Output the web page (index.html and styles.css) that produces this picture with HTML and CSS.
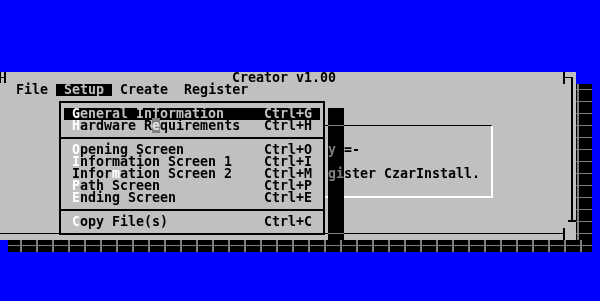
FILE: index.html
```html
<!DOCTYPE html>
<html>
<head>
<meta charset="utf-8">
<title>Creator v1.00</title>
<link rel="stylesheet" href="styles.css">
</head>
<body>
<div class="screen">
  <div class="desk">
    <div class="window">
      <div class="title">Creator v1.00</div>
      <div class="menubar">
        <span class="mi">File</span>
        <span class="mi active">Setup</span>
        <span class="mi">Create</span>
        <span class="mi">Register</span>
      </div>
      <div class="workspace">
        <div class="dialog">
          <div class="dline">y =-</div>
          <div class="dline gap">gister CzarInstall.</div>
        </div>
      </div>

      <i class="orn tl"></i>
      <i class="orn tr-tick"></i>
      <i class="orn tr-h"></i>
      <i class="orn r-line"></i>
      <i class="orn r-foot"></i>
      <i class="orn br-tick"></i>
      <i class="orn b-line"></i>

      <div class="dropdown">
        <div class="item sel"><span><b class="hk">G</b>eneral Information</span><span>Ctrl+G</span></div>
        <div class="item"><span><b class="hk">H</b>ardware R<span class="cur">e</span>quirements</span><span>Ctrl+H</span></div>
        <div class="sep"></div>
        <div class="item"><span><b class="hk">O</b>pening Screen</span><span>Ctrl+O</span></div>
        <div class="item"><span><b class="hk">I</b>nformation Screen 1</span><span>Ctrl+I</span></div>
        <div class="item"><span>Infor<b class="hk">m</b>ation Screen 2</span><span>Ctrl+M</span></div>
        <div class="item"><span><b class="hk">P</b>ath Screen</span><span>Ctrl+P</span></div>
        <div class="item"><span><b class="hk">E</b>nding Screen</span><span>Ctrl+E</span></div>
        <div class="sep"></div>
        <div class="item"><span><b class="hk">C</b>opy File(s)</span><span>Ctrl+C</span></div>
      </div>
      <div class="mshadow"></div>
    </div>
    <div class="shadow-r shade"></div>
    <div class="shadow-b shade"></div>
  </div>
</div>
</body>
</html>
```

FILE: styles.css
```css
* {
  box-sizing: border-box;
  margin: 0;
  padding: 0;
}

html, body {
  background: #0000ff;
}

body {
  width: 600px;
  height: 301px;
  overflow: hidden;
  font-family: "DejaVu Sans Mono", "Liberation Mono", monospace;
  font-weight: bold;
  font-size: 13.3px;
  line-height: 12px;
  color: #000;
}

.screen {
  width: 600px;
  height: 301px;
  background: #0000ff;
  padding-top: 72px;
}

.desk {
  display: grid;
  grid-template-columns: 8px 568px 16px;
  grid-template-rows: 12px 156px 12px;
}

.window {
  grid-column: 1 / 3;
  grid-row: 1 / 3;
  background: #c0c0c0;
  position: relative;
}

.shade {
  background-color: #000;
  background-image:
    linear-gradient(to right, #808080 2px, transparent 2px),
    linear-gradient(to bottom, #808080 1px, transparent 1px);
  background-size: 16px 12px;
  background-attachment: fixed;
  background-position: 4px 5px;
}

.shadow-r {
  grid-column: 3;
  grid-row: 2 / 4;
  background-position: 1px 5px;
}

.shadow-b {
  grid-column: 2 / 4;
  grid-row: 3;
}

.title {
  height: 12px;
  padding-left: 232px;
  white-space: pre;
}

.menubar {
  display: flex;
  height: 12px;
  padding-left: 8px;
}

.mi {
  padding: 0 8px;
  white-space: pre;
}

.mi.active {
  background: #000;
  color: #c0c0c0;
}

.workspace {
  height: 144px;
  padding-top: 29px;
}

.dialog {
  margin-left: 120px;
  width: 373px;
  height: 73px;
  border-top: 1px solid #000;
  border-left: 1px solid #000;
  border-right: 2px solid #fff;
  border-bottom: 2px solid #fff;
  padding-top: 18px;
  padding-left: 207px;
}

.dline {
  height: 12px;
  white-space: pre;
}

.dline.gap {
  margin-top: 12px;
}

/* window frame ornaments */
.orn {
  position: absolute;
  display: block;
  background: #000;
}

.tl {
  left: 0;
  top: 0;
  width: 6px;
  height: 11px;
  background: linear-gradient(#000, #000) no-repeat 0 5px / 100% 1px;
  border-left: 1px solid #000;
  border-right: 2px solid #000;
}

.tr-tick {
  left: 563px;
  top: 0;
  width: 2px;
  height: 12px;
}

.tr-h {
  left: 565px;
  top: 5px;
  width: 8px;
  height: 1px;
}

.r-line {
  left: 571px;
  top: 5px;
  width: 2px;
  height: 145px;
}

.r-foot {
  left: 568px;
  top: 148px;
  width: 8px;
  height: 2px;
}

.br-tick {
  left: 563px;
  top: 156px;
  width: 2px;
  height: 12px;
}

.b-line {
  left: 0;
  top: 161px;
  width: 565px;
  height: 1px;
}

/* dropdown menu */
.dropdown {
  position: absolute;
  left: 59px;
  top: 29px;
  width: 266px;
  height: 134px;
  background: #c0c0c0;
  border: 2px solid #000;
  padding: 5px 0;
}

.item {
  display: flex;
  justify-content: space-between;
  height: 12px;
  margin: 0 3px;
  padding: 0 8px;
  white-space: pre;
}

.item b {
  font-weight: bold;
}

.item.sel {
  background: #000;
  color: #c0c0c0;
}

.hk {
  color: #fff;
}

.cur {
  background: #808080;
  color: #e8e8e8;
}

.sep {
  height: 12px;
  background: linear-gradient(#000, #000) no-repeat 0 5px / 100% 2px;
}

.mshadow {
  position: absolute;
  left: 328px;
  top: 36px;
  width: 16px;
  height: 132px;
  backdrop-filter: invert(1) brightness(0.5) contrast(1.3333);
}
```
